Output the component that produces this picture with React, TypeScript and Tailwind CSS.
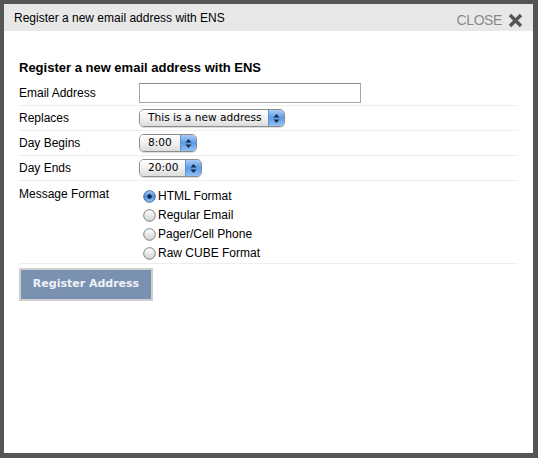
import React, { useState } from 'react';

const Select: React.FC<{ value: string; width: string }> = ({ value, width }) => (
  <div
    className={`${width} h-[18px] flex items-stretch rounded-[5px] border border-[#8c8c8c] overflow-hidden shadow-[0_1px_1px_rgba(0,0,0,0.15)]`}
  >
    <div className="flex-1 flex items-center pl-[8px] bg-gradient-to-b from-[#ffffff] via-[#f1f1f1] to-[#dcdcdc] text-[10.6px] text-black font-['DejaVu_Sans',sans-serif]">
      {value}
    </div>
    <div className="w-[16px] flex items-center justify-center border-l border-[#6f8fc4] bg-gradient-to-b from-[#a9cdf7] via-[#5b9be8] to-[#8fc0f5]">
      <svg width="7" height="11" viewBox="0 0 7 11">
        <path d="M3.5 1 L6.5 4.5 L0.5 4.5 Z" fill="#1c2a40" />
        <path d="M3.5 10 L6.5 6.5 L0.5 6.5 Z" fill="#1c2a40" />
      </svg>
    </div>
  </div>
);

const Radio: React.FC<{ checked: boolean }> = ({ checked }) => (
  <svg width="13" height="13" viewBox="0 0 13 13" className="shrink-0">
    <defs>
      <linearGradient id="rOff" x1="0" y1="0" x2="0" y2="1">
        <stop offset="0" stopColor="#ffffff" />
        <stop offset="1" stopColor="#d0d0d0" />
      </linearGradient>
      <linearGradient id="rOn" x1="0" y1="0" x2="0" y2="1">
        <stop offset="0" stopColor="#a8cbf5" />
        <stop offset="0.5" stopColor="#4f8fe0" />
        <stop offset="1" stopColor="#9cc6f4" />
      </linearGradient>
    </defs>
    <circle cx="6.5" cy="6.5" r="5.8" fill={checked ? 'url(#rOn)' : 'url(#rOff)'} stroke={checked ? '#40609a' : '#707070'} strokeWidth="0.9" />
    {checked && <circle cx="6.5" cy="6.5" r="2.2" fill="#14233f" />}
  </svg>
);

const Row: React.FC<{ label: string; children: React.ReactNode }> = ({ label, children }) => (
  <div className="h-[25px] flex items-center border-b border-[#eeeeee]">
    <div className="w-[120px] shrink-0">{label}</div>
    {children}
  </div>
);

const formats = ['HTML Format', 'Regular Email', 'Pager/Cell Phone', 'Raw CUBE Format'];

export default function App() {
  const [format, setFormat] = useState(0);

  return (
    <div className="w-[538px] h-[458px] bg-[#555555] pt-[4px] pl-[4px] pr-[5px] pb-[5px] font-['Liberation_Sans',Arial,sans-serif]">
      <div className="w-full h-full bg-white flex flex-col">
        <div className="h-[27px] shrink-0 bg-[#e8e8e8] flex items-center justify-between pl-[10px] pr-[10px]">
          <span className="text-[12px] text-black">Register a new email address with ENS</span>
          <div className="flex items-center gap-[6px] pt-[6px]">
            <span className="text-[14px] leading-[15px] text-[#8a8a8a] tracking-[-0.4px]">CLOSE</span>
            <svg width="15" height="15" viewBox="0 0 15 15">
              <path d="M2 2 L13 13 M13 2 L2 13" stroke="#555555" strokeWidth="3.4" strokeLinecap="butt" />
            </svg>
          </div>
        </div>

        <div className="pt-[29px] px-[15px] text-[12px] text-black">
          <h2 className="text-[13px] leading-[16px] font-bold mb-[5px]">Register a new email address with ENS</h2>

          <Row label="Email Address">
            <input
              type="text"
              className="w-[222px] h-[20px] border border-[#a5a5a5] border-t-[#8c8c8c] outline-none px-[3px] text-[12px]"
            />
          </Row>
          <Row label="Replaces">
            <Select value="This is a new address" width="w-[146px]" />
          </Row>
          <Row label="Day Begins">
            <Select value="8:00" width="w-[58px]" />
          </Row>
          <Row label="Day Ends">
            <Select value="20:00" width="w-[63px]" />
          </Row>

          <div className="flex pt-[6px] pb-[0px] border-b border-[#eeeeee]">
            <div className="w-[124px] shrink-0 leading-[15px]">Message Format</div>
            <div className="flex flex-col">
              {formats.map((f, i) => (
                <label key={f} className="h-[19px] flex items-center gap-[2px] cursor-pointer" onClick={() => setFormat(i)}>
                  <Radio checked={format === i} />
                  <span className="leading-[15px]">{f}</span>
                </label>
              ))}
            </div>
          </div>

          <button className="mt-[4px] w-[134px] h-[33px] border-2 border-[#cfcfcf] bg-[#7b91b1] text-[#eef1f6] text-[11px] font-bold font-['DejaVu_Sans',sans-serif]">
            Register Address
          </button>
        </div>
      </div>
    </div>
  );
}
